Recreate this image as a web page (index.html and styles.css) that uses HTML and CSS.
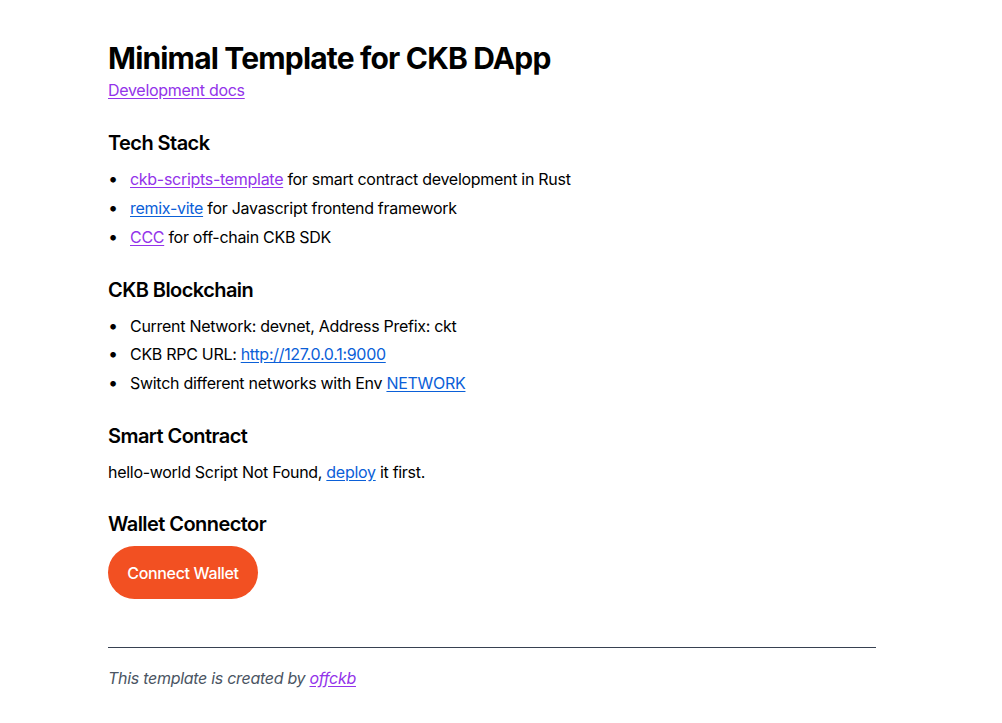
FILE: index.html
```html
<!DOCTYPE html>
<html lang="en">
<head>
<meta charset="utf-8">
<title>Minimal Template for CKB DApp</title>
<link rel="stylesheet" href="styles.css">
</head>
<body>
<main class="page">
  <h1 class="title">Minimal Template for CKB DApp</h1>
  <a class="link visited" href="#">Development docs</a>

  <section class="section">
    <h2 class="heading">Tech Stack</h2>
    <ul class="list">
      <li><span><a class="link visited" href="#">ckb-scripts-template</a> for smart contract development in Rust</span></li>
      <li><span><a class="link" href="#">remix-vite</a> for Javascript frontend framework</span></li>
      <li><span><a class="link visited" href="#">CCC</a> for off-chain CKB SDK</span></li>
    </ul>
  </section>

  <section class="section">
    <h2 class="heading">CKB Blockchain</h2>
    <ul class="list">
      <li><span>Current Network: devnet, Address Prefix: ckt</span></li>
      <li><span>CKB RPC URL: <a class="link" href="#">http://127.0.0.1:9000</a></span></li>
      <li><span>Switch different networks with Env <a class="link" href="#">NETWORK</a></span></li>
    </ul>
  </section>

  <section class="section">
    <h2 class="heading">Smart Contract</h2>
    <p class="text">hello-world Script Not Found, <a class="link" href="#">deploy</a> it first.</p>
  </section>

  <section class="section wallet">
    <h2 class="heading">Wallet Connector</h2>
    <button class="connect">Connect Wallet</button>
  </section>

  <footer class="footer">
    <p class="credit">This template is created by <a class="link visited" href="#">offckb</a></p>
  </footer>
</main>
</body>
</html>
```

FILE: styles.css
```css
* { box-sizing: border-box; }
html, body { margin: 0; padding: 0; background: #fff; }
body {
  font-family: Inter, "Liberation Sans", Arial, sans-serif;
  color: #000;
  font-size: 16px;
  line-height: 24px;
  letter-spacing: -0.29px;
}
.page {
  width: 768px;
  margin-left: 108px;
  padding-top: 40px;
}
.title {
  margin: 0 0 2px 0;
  font-size: 30px;
  line-height: 36px;
  font-weight: 700;
  letter-spacing: -0.82px;
}
.link {
  color: #0b60d8;
  text-decoration: underline;
  text-underline-offset: 2px;
}
.link.visited { color: #9333ea; }
.section { margin-top: 27px; }
.heading {
  margin: 0;
  font-size: 20px;
  line-height: 28px;
  font-weight: 600;
  letter-spacing: -0.56px;
}
.list {
  margin: 10px 0 0 0;
  padding: 0;
  list-style: none;
}
.list li {
  display: flex;
  line-height: 24px;
  margin-bottom: 4.75px;
}
.list li::before {
  content: "\2022";
  flex: 0 0 22px;
  font-size: 18px;
  padding-left: 0;
}
.text { margin: 10px 0 0 0; }
.section.wallet { margin-top: 26px; }
.connect {
  display: block;
  margin-top: 8px;
  width: 150px;
  height: 53px;
  border: none;
  border-radius: 27px;
  background: #f25022;
  color: #fff;
  font-family: inherit;
  font-size: 16px;
  font-weight: 500;
  letter-spacing: -0.35px;
  cursor: pointer;
}
.footer {
  margin-top: 48px;
  border-top: 1px solid #374151;
}
.credit {
  margin: 18px 0 0 0;
  font-style: italic;
  color: #4b5563;
}
```
